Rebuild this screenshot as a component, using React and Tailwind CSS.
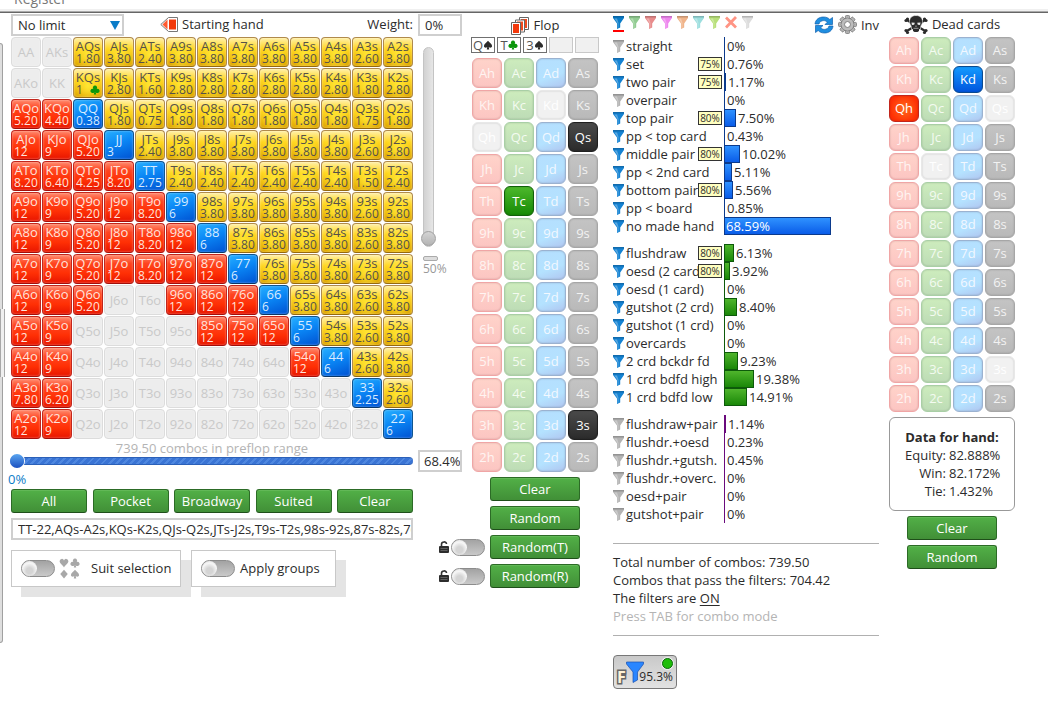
import { Fragment } from 'react'
import clsx from 'clsx'

const RANKS = ['A', 'K', 'Q', 'J', 'T', '9', '8', '7', '6', '5', '4', '3', '2']
const SUITS = ['h', 'c', 'd', 's']

// one row per rank, "-" is a hand outside of the range
const RANGE = [
  '- - 1.80 3.80 2.40 3.80 3.80 3.80 3.80 3.80 3.80 2.60 3.80',
  '- - 1 2.80 1.60 2.80 2.80 2.80 2.80 2.80 2.80 1.80 2.80',
  '5.20 4.40 0.38 1.80 0.75 1.80 1.80 1.80 1.80 1.80 1.80 1.75 1.80',
  '12 9 5.20 3 2.40 3.80 3.80 3.80 3.80 3.80 3.80 2.60 3.80',
  '8.20 6.40 4.25 8.20 2.75 2.40 2.40 2.40 2.40 2.40 2.40 1.50 2.40',
  '12 9 5.20 12 8.20 6 3.80 3.80 3.80 3.80 3.80 2.60 3.80',
  '12 9 5.20 12 8.20 12 6 3.80 3.80 3.80 3.80 2.60 3.80',
  '12 9 5.20 12 8.20 12 12 6 3.80 3.80 3.80 2.60 3.80',
  '12 9 5.20 - - 12 12 12 6 3.80 3.80 2.60 3.80',
  '12 9 - - - - 12 12 12 6 3.80 2.60 3.80',
  '12 9 - - - - - - - 12 6 2.60 3.80',
  '7.80 6.20 - - - - - - - - - 2.25 2.60',
  '12 9 - - - - - - - - - - 6',
].map((row) => row.split(' '))

const HAND_STYLES = {
  suited:
    'border-[#b08a4c] border-b-[#95690e] text-[#55514a] bg-[radial-gradient(ellipse_at_50%_60%,#ffe633_0%,transparent_65%),linear-gradient(#fff0a8,#ffd51f_40%,#dfa700)]',
  offsuit:
    'border-[#c2261c] border-b-[#a30f0a] text-[#ffe3dc] bg-[linear-gradient(#ff8a6e,#ff4420_30%,#ff3005_65%,#e81600)]',
  pair:
    'border-[#0f5590] border-b-[#0a3766] text-[#d8ebff] bg-[linear-gradient(160deg,#27b0ff,#0a86f5_45%,#0052d2)]',
  none: 'border-[#dcdcdc] text-[#c9c9c9] bg-[#ededed]',
}

const CARD_STYLES = {
  h: 'border-[#f0a5a5] bg-[linear-gradient(#ffd3ca,#fcc5c2)] text-[#fff4f2]',
  c: 'border-[#a9cfa6] bg-[linear-gradient(#cdecbd,#bddcb6)] text-[#f4fbf1]',
  d: 'border-[#9bb2d0] bg-[linear-gradient(160deg,#b5dfff,#b4e2ff_60%,#b0c6f0)] text-[#f2f8ff]',
  s: 'border-[#a6a6a6] bg-[linear-gradient(#c4c4c4,#b9b9b9)] text-[#f2f2f2]',
}

const PICKED_STYLES = {
  h: 'border-[#c2261c] bg-[radial-gradient(circle,#ff6a1a,#ff3005_75%)] text-white',
  c: 'border-[#11600a] bg-[linear-gradient(#4db82c,#168a05)] text-white',
  d: 'border-[#0a4a90] bg-[linear-gradient(#149bff,#0055dd)] text-white',
  s: 'border-[#1f1f1f] bg-[linear-gradient(#4a4a4a,#2b2b2b)] text-white',
}

const GROUPS = [
  {
    color: 'blue',
    rows: [
      { name: 'straight', value: '0', off: true },
      { name: 'set', value: '0.76', badge: '75%' },
      { name: 'two pair', value: '1.17', badge: '75%' },
      { name: 'overpair', value: '0', off: true },
      { name: 'top pair', value: '7.50', badge: '80%' },
      { name: 'pp < top card', value: '0.43' },
      { name: 'middle pair', value: '10.02', badge: '80%' },
      { name: 'pp < 2nd card', value: '5.11' },
      { name: 'bottom pair', value: '5.56', badge: '80%' },
      { name: 'pp < board', value: '0.85' },
      { name: 'no made hand', value: '68.59' },
    ],
  },
  {
    color: 'green',
    rows: [
      { name: 'flushdraw', value: '6.13', badge: '80%' },
      { name: 'oesd (2 card)', value: '3.92', badge: '80%' },
      { name: 'oesd (1 card)', value: '0' },
      { name: 'gutshot (2 crd)', value: '8.40' },
      { name: 'gutshot (1 crd)', value: '0' },
      { name: 'overcards', value: '0' },
      { name: '2 crd bckdr fd', value: '9.23' },
      { name: '1 crd bdfd high', value: '19.38' },
      { name: '1 crd bdfd low', value: '14.91' },
    ],
  },
  {
    color: 'purple',
    rows: [
      { name: 'flushdraw+pair', value: '1.14', off: true },
      { name: 'flushdr.+oesd', value: '0.23', off: true },
      { name: 'flushdr.+gutsh.', value: '0.45', off: true },
      { name: 'flushdr.+overc.', value: '0', off: true },
      { name: 'oesd+pair', value: '0', off: true },
      { name: 'gutshot+pair', value: '0', off: true },
    ],
  },
]

const BAR_STYLES = {
  blue: 'border-[#0b3a8c] bg-[linear-gradient(#2f92ff,#0a5ce8)]',
  green: 'border-[#0d5a0a] bg-[linear-gradient(#4fb52c,#1a8708)]',
  purple: 'border-[#6a0a7c] bg-[#7a1a8c]',
}

const LINE_STYLES = {
  blue: 'bg-[#0b3a8c]',
  green: 'bg-[#0d5a0a]',
  purple: 'bg-[#6a0a7c]',
}

const SUIT_PATHS = {
  s: 'M8 1C6 4 1.500 6 1.500 9.500c0 2.800 3.600 3.700 5.300 1.500L6 15h4l-.8-4c1.700 2.200 5.300 1.300 5.300-1.500C14.500 6 10 4 8 1z',
  c: 'M8 1a3.300 3.300 0 0 0-2.500 5.500A3.300 3.300 0 1 0 7 11l-1 4h4l-1-4a3.300 3.300 0 1 0 1.500-4.500A3.300 3.300 0 0 0 8 1z',
  h: 'M8 15C6 11 1 8.500 1 5a3.600 3.600 0 0 1 7-1.200A3.600 3.600 0 0 1 15 5c0 3.500-5 6-7 10z',
  d: 'M8 1l6 7-6 7-6-7z',
}

function Suit({ suit, className }) {
  return (
    <svg viewBox="0 0 16 16" className={className} fill="currentColor" aria-hidden="true">
      <path d={SUIT_PATHS[suit]} />
    </svg>
  )
}

function Funnel({ className = 'text-[#1583d3]' }) {
  return (
    <svg viewBox="0 0 11 13" className={clsx('w-[11px] h-[13px] shrink-0', className)} aria-hidden="true">
      <path d="M0 0h11v2L7.200 7.500v4L4 13V7.500L0 2z" fill="currentColor" />
      <path d="M0 0h11v1.500H0z" fill="#000" opacity=".18" />
      <path d="M1.500 2.500h2.500L5.500 7v4.500L4.500 12V7z" fill="#fff" opacity=".3" />
    </svg>
  )
}

function GreenButton({ className, children }) {
  return (
    <button
      type="button"
      className={clsx(
        'h-6 shrink-0 rounded-[3px] border border-[#2c6b26] border-b-[#1f4f1a] text-white leading-[20px]',
        'shadow-[inset_0_1px_0_#62b857] bg-[linear-gradient(#52b047,#418f37)]',
        className
      )}
    >
      {children}
    </button>
  )
}

function Toggle({ id, label }) {
  return (
    <input
      id={id}
      type="checkbox"
      role="switch"
      aria-label={label}
      className="appearance-none shrink-0 w-[34px] h-[17px] rounded-full border border-[#8c8c8c] bg-[linear-gradient(#a3a3a3,#c9c9c9)] before:block before:size-[15px] before:rounded-full before:bg-[radial-gradient(circle_at_50%_65%,#d4d4d4_25%,#f6f6f6_60%,#dcdcdc)]"
    />
  )
}

function HandCell({ row, col }) {
  const value = RANGE[row][col]
  const name =
    row === col
      ? RANKS[row] + RANKS[row]
      : row < col
        ? RANKS[row] + RANKS[col] + 's'
        : RANKS[col] + RANKS[row] + 'o'
  const kind = value === '-' ? 'none' : row === col ? 'pair' : row < col ? 'suited' : 'offsuit'

  return (
    <button
      type="button"
      className={clsx(
        'relative size-[30px] rounded border flex flex-col justify-center whitespace-nowrap text-left',
        'shadow-[inset_0_0_2px_rgba(255,255,255,0.5)]',
        HAND_STYLES[kind]
      )}
    >
      <span className="self-center leading-[13px]">{name}</span>
      {kind !== 'none' && <span className="self-start pl-[2px] text-xs leading-[12px]">{value}</span>}
      {name === 'KQs' && <Suit suit="c" className="absolute right-[2px] bottom-[2px] size-[10px] text-[#0a960a]" />}
    </button>
  )
}

function CardGrid({ picked, blocked, rowClass }) {
  return (
    <div className="grid grid-cols-[repeat(4,30px)] gap-[2px]">
      {RANKS.map((rank) => (
        <Fragment key={rank}>
          {SUITS.map((suit) => {
            const card = rank + suit
            const style = picked.includes(card)
              ? PICKED_STYLES[suit]
              : blocked.includes(card)
                ? 'border-[#e8e8e8] bg-[#f1f1f1] text-white'
                : CARD_STYLES[suit]
            return (
              <button
                key={card}
                type="button"
                className={clsx('rounded-md border pt-px shadow-[inset_0_0_2px_rgba(0,0,0,0.18)]', rowClass, style)}
              >
                {card}
              </button>
            )
          })}
        </Fragment>
      ))}
    </div>
  )
}

function StatRow({ row, color }) {
  const width = Math.max(1, Math.round(Number(row.value) * 1.56))
  const inside = width > 60

  return (
    <li className="flex h-[18px] items-center leading-[18px]">
      <div className="relative flex items-center gap-[2px] w-[111px] shrink-0 whitespace-nowrap">
        <Funnel className={row.off ? 'text-[#b4b4b4]' : 'text-[#1583d3]'} />
        <span>{row.name}</span>
        {row.badge && (
          <span className="absolute right-[2px] top-1/2 -translate-y-1/2 w-6 h-[14px] border border-[#333] bg-[#ffffc0] text-center text-[10px] leading-[12px]">
            {row.badge}
          </span>
        )}
      </div>
      <div
        className={clsx('h-full shrink-0 flex items-center', width > 3 ? ['border', BAR_STYLES[color]] : LINE_STYLES[color])}
        style={{ width }}
      >
        {inside && <span className="pl-px text-white">{row.value}%</span>}
      </div>
      {!inside && <span className="pl-[2px]">{row.value}%</span>}
    </li>
  )
}

function StackedCards() {
  return (
    <svg viewBox="0 0 19 18" className="w-[19px] h-[18px]" aria-hidden="true">
      <g fill="#f04a1c">
        <path d="M8.500.5h9v12h-9z" stroke="#666" fill="#fff" />
        <path d="M10 2h6v9h-6z" />
        <path d="M4.500 3h9v12h-9z" stroke="#666" fill="#fff" />
        <path d="M6 4.500h6v9H6z" />
        <path d="M.5 5.500h9v12h-9z" stroke="#666" fill="#fff" />
        <path d="M2 7h6v9H2z" fill="#f3380c" />
      </g>
    </svg>
  )
}

function HandIcon() {
  return (
    <svg viewBox="0 0 19 16" className="w-[19px] h-4" aria-hidden="true">
      <path d="M8.500.5h9v14h-9L.8 7.500z" fill="#fff" stroke="#777" />
      <path d="M7.500 2.500v10L2.500 7.500z" fill="#ff5a30" />
      <path d="M9 2.500h7v10H9z" fill="#f2380a" />
    </svg>
  )
}

function Lock() {
  return (
    <svg viewBox="0 0 10 12" className="w-[10px] h-3 shrink-0" aria-hidden="true">
      <path d="M2.500 6V3.200C2.500.2 7.500.2 7.500 3" fill="none" stroke="#333" strokeWidth="1.600" />
      <rect y="5" width="10" height="7" rx="1" fill="#2d2d2d" />
      <path d="M1.500 7.500h7M1.500 9.500h7" stroke="#777" strokeWidth=".7" />
    </svg>
  )
}

function Skull() {
  return (
    <svg viewBox="0 0 24 20" className="w-6 h-5" fill="#2b2b2b" aria-hidden="true">
      <path d="M2 4.500l20 12M22 4.500l-20 12" stroke="#2b2b2b" strokeWidth="2.200" />
      <circle cx="2" cy="5.500" r="1.600" />
      <circle cx="3.500" cy="4" r="1.600" />
      <circle cx="22" cy="5.500" r="1.600" />
      <circle cx="20.500" cy="4" r="1.600" />
      <circle cx="2" cy="15.500" r="1.600" />
      <circle cx="3.500" cy="17.500" r="1.600" />
      <circle cx="22" cy="15.500" r="1.600" />
      <circle cx="20.500" cy="17.500" r="1.600" />
      <path d="M12 .5c4.500 0 6.500 2.600 6.500 6 0 2.200-.8 3.200-1.500 4.200l-.7 3.800H7.700L7 10.700c-.7-1-1.500-2-1.500-4.200 0-3.400 2-6 6.500-6z" stroke="#fff" strokeWidth=".6" />
      <path d="M7.500 7.500l3.300.3-.6 2-2.300.3zM16.500 7.500l-3.300.3.6 2 2.300.3zM12 10.200l.8 1.400h-1.600z" fill="#e8e8e8" />
      <path d="M9 13.500h6v2.500l-1.500 1h-3L9 16z" />
      <path d="M9.500 13.300h5" stroke="#ccc" strokeWidth=".7" />
    </svg>
  )
}

function Refresh() {
  return (
    <svg viewBox="0 0 20 18" className="w-5 h-[18px]" aria-hidden="true">
      <path d="M1 8C1.500 3.500 5 1 9.500 1c3 0 5 1 6.300 2.500L18.500 1.500V8.500H11l2.300-2.300C12.300 5.200 11.200 4.600 9.700 4.600 7.300 4.600 5.600 5.800 5 8z" fill="#1f8ee0" stroke="#0e5fae" strokeWidth=".7" />
      <path d="M19 10c-.5 4.500-4 7-8.500 7-3 0-5-1-6.300-2.500L1.500 16.500V9.500H9l-2.300 2.300c1 1 2.100 1.600 3.600 1.600 2.400 0 4.100-1.200 4.700-3.400z" fill="#1f8ee0" stroke="#0e5fae" strokeWidth=".7" />
    </svg>
  )
}

function Gear() {
  return (
    <svg viewBox="-9 -9 18 18" className="size-[19px]" aria-hidden="true">
      <g fill="#b4b4b4" stroke="#7a7a7a" strokeWidth=".8">
        {[0, 45, 90, 135].map((angle) => (
          <rect key={angle} x="-2" y="-8.500" width="4" height="17" rx="1" transform={`rotate(${angle})`} />
        ))}
        <circle r="6" />
      </g>
      <circle r="5.600" fill="#bcbcbc" />
      <circle r="2.800" fill="#fff" stroke="#7a7a7a" strokeWidth=".9" />
    </svg>
  )
}

const TABS = [
  'text-[#92cc92]',
  'text-[#e88c8c]',
  'text-[#ee86ee]',
  'text-[#f0b48a]',
  'text-[#9cdede]',
  'text-[#b8e07a]',
]

function RangePanel() {
  return (
    <section className="flex gap-[5px]">
      <div className="w-[402px]">
        <div className="flex h-[23px] pb-px items-center">
          <div className="relative h-[22px] w-[113px]">
            <select aria-label="Limit" className="appearance-none w-full h-full border-2 border-[#cfcfcf] bg-white pl-[5px] leading-[18px]">
              <option>No limit</option>
            </select>
            <svg viewBox="0 0 10 9" className="absolute right-[4px] top-[7px] w-[10px] h-[9px] pointer-events-none" aria-hidden="true">
              <path d="M0 0h10L5 9z" fill="#0a7cc8" />
            </svg>
          </div>
          <div className="ml-9 flex items-center gap-[3px]">
            <HandIcon />
            <h2>Starting hand</h2>
          </div>
          <label htmlFor="weight" className="ml-auto">Weight:</label>
        </div>

        <div className="grid grid-cols-[repeat(13,30px)] gap-px">
          {RANKS.map((rank, row) => (
            <Fragment key={rank}>
              {RANKS.map((other, col) => (
                <HandCell key={other} row={row} col={col} />
              ))}
            </Fragment>
          ))}
        </div>

        <p className="text-center text-[#b4b4b4] leading-[18px]">739.50 combos in preflop range</p>
        <input
          type="range"
          aria-label="Preflop range"
          defaultValue="0"
          className="block appearance-none w-[403px] -ml-px h-2 rounded-full bg-[repeating-linear-gradient(135deg,#3a74d4_0px,#3a74d4_3px,#4f88e0_3px,#4f88e0_5px)] border-y border-[#2b60b8] [&::-webkit-slider-thumb]:appearance-none [&::-webkit-slider-thumb]:size-[14px] [&::-webkit-slider-thumb]:rounded-full [&::-webkit-slider-thumb]:bg-[linear-gradient(#5aa5f0,#1a50c0)] [&::-webkit-slider-thumb]:shadow-[0_0_0_1px_#fff]"
        />
        <p className="-ml-[3px] mt-[5px] mb-px leading-[18px] text-[#0a7cc8]">0%</p>

        <div className="flex justify-between">
          {['All', 'Pocket', 'Broadway', 'Suited', 'Clear'].map((name) => (
            <GreenButton key={name} className="w-[76px]">
              {name}
            </GreenButton>
          ))}
        </div>

        <input
          type="text"
          aria-label="Range"
          defaultValue="TT-22,AQs-A2s,KQs-K2s,QJs-Q2s,JTs-J2s,T9s-T2s,98s-92s,87s-82s,76s-72s"
          className="mt-[5px] block w-full h-[22px] border-2 border-[#cfcfcf] pl-[5px]"
        />

        <div className="mt-[10px] flex gap-[10px]">
          <div className="flex items-center h-[37px] w-[170px] pl-[9px] border border-[#c8c8c8] bg-white shadow-[10px_10px_0_#e4e4e4]">
            <Toggle id="suits" />
            <span className="ml-1 grid grid-cols-2 gap-px text-[#a8a8a8]">
              <Suit suit="h" className="size-[10px]" />
              <Suit suit="c" className="size-[10px]" />
              <Suit suit="d" className="size-[10px]" />
              <Suit suit="s" className="size-[10px]" />
            </span>
            <label htmlFor="suits" className="ml-[11px]">Suit selection</label>
          </div>
          <div className="flex items-center h-[37px] w-[145px] pl-[9px] border border-[#c8c8c8] bg-white shadow-[10px_10px_0_#e4e4e4]">
            <Toggle id="groups" />
            <label htmlFor="groups" className="ml-[5px]">Apply groups</label>
          </div>
        </div>
      </div>

      <div className="w-11">
        <input id="weight" type="text" defaultValue="0%" className="block w-full h-[22px] border-2 border-[#cfcfcf] pl-[5px]" />
        <input
          type="range"
          aria-label="Hand weight"
          defaultValue="0"
          className="block appearance-none mt-[11px] ml-[5px] w-[11px] h-[200px] rounded-full border border-[#c4c4c4] bg-[linear-gradient(90deg,#d2d2d2,#e6e6e6)] [writing-mode:vertical-lr] [direction:rtl] [&::-webkit-slider-thumb]:appearance-none [&::-webkit-slider-thumb]:size-[15px] [&::-webkit-slider-thumb]:rounded-full [&::-webkit-slider-thumb]:border [&::-webkit-slider-thumb]:border-[#a0a0a0] [&::-webkit-slider-thumb]:bg-[linear-gradient(#d4d4d4,#b4b4b4)]"
        />
        <div className="mt-[9px] ml-[5px] w-[15px] h-[5px] rounded-xs border border-[#aaa] bg-[#ddd]" />
        <p className="ml-[5px] text-xs text-[#999] leading-4">50%</p>
        <input
          type="text"
          aria-label="Range percent"
          defaultValue="68.4%"
          className="mt-[173px] block w-full h-[22px] border-2 border-[#cfcfcf] pl-[4px]"
        />
      </div>
    </section>
  )
}

function FlopPanel() {
  return (
    <section className="w-32">
      <div className="flex h-[23px] items-center justify-center gap-1">
        <StackedCards />
        <h2>Flop</h2>
      </div>
      <div className="flex justify-between h-4">
        {['Qs', 'Tc', '3s'].map((card) => (
          <span key={card} className="w-6 flex items-center justify-center border border-[#707070] text-[#555] leading-[14px]">
            {card[0]}
            <Suit suit={card[1]} className={clsx('size-[10px]', card[1] === 'c' ? 'text-[#0a960a]' : 'text-[#2b2b2b]')} />
          </span>
        ))}
        <span className="w-6 border border-[#c8c8c8] bg-[#f0f0f0]" />
        <span className="w-6 border border-[#c8c8c8] bg-[#f0f0f0]" />
      </div>
      <div className="mt-[5px] ml-px">
        <CardGrid picked={['Qs', 'Tc', '3s']} blocked={['Kd', 'Qh']} rowClass="h-[30px]" />
      </div>
      <div className="mt-[5px] mr-[19px] flex flex-col gap-[5px]">
        <div className="flex justify-end"><GreenButton className="w-[90px]">Clear</GreenButton></div>
        <div className="flex justify-end"><GreenButton className="w-[90px]">Random</GreenButton></div>
        {['Random(T)', 'Random(R)'].map((name) => (
          <div key={name} className="flex items-center justify-end">
            <Lock />
            <span className="ml-[2px] mr-[5px] flex">
              <Toggle label={'Lock ' + name} />
            </span>
            <GreenButton className="w-[90px]">{name}</GreenButton>
          </div>
        ))}
      </div>
    </section>
  )
}

function StatsPanel() {
  return (
    <section className="flex-1 min-w-[266px]">
      <div className="flex h-[23px] items-start pt-px">
        <div className="flex gap-[5px] pt-px">
          <button type="button" aria-label="Filter 1" className="border-b-2 border-[#f00] pb-px">
            <Funnel className="text-[#0a7cc8]" />
          </button>
          {TABS.map((tab, i) => (
            <button key={tab} type="button" aria-label={'Filter ' + (i + 2)} className="self-start">
              <Funnel className={tab} />
            </button>
          ))}
          <button type="button" aria-label="Remove filters" className="self-start">
            <svg viewBox="0 0 12 13" className="w-3 h-[13px]" aria-hidden="true">
              <path d="M1 1.500l10 10M11 1L1 11.500" stroke="#ff9484" strokeWidth="2.800" />
            </svg>
          </button>
          <button type="button" aria-label="No filter" className="self-start">
            <Funnel className="text-[#dcdcdc]" />
          </button>
        </div>
        <div className="ml-auto flex items-center gap-1">
          <button type="button" aria-label="Refresh"><Refresh /></button>
          <button type="button" aria-label="Settings"><Gear /></button>
          <button type="button" className="leading-[18px]">Inv</button>
        </div>
      </div>

      <div className="flex flex-col gap-[9px]">
        {GROUPS.map((group) => (
          <ul key={group.color}>
            {group.rows.map((row) => (
              <StatRow key={row.name} row={row} color={group.color} />
            ))}
          </ul>
        ))}
      </div>

      <div className="mt-5 border-y border-[#b0b0b0] pt-[9px] pb-[10px] leading-[18px]">
        <p>Total number of combos: 739.50</p>
        <p>Combos that pass the filters: 704.42</p>
        <p>
          The filters are <a href="#filters" className="underline underline-offset-2">ON</a>
        </p>
        <p className="text-[#b4b4b4]">Press TAB for combo mode</p>
      </div>

      <button
        type="button"
        className="relative mt-[19px] flex w-16 h-[34px] items-end rounded border border-[#777] bg-[linear-gradient(#c9c9c9,#e2e2e2)] pl-[3px]"
      >
        <span className="font-bold text-base leading-[22px] text-[#fff3d6] [-webkit-text-stroke:3px_#666] [paint-order:stroke_fill]">F</span>
        <svg viewBox="0 0 18 22" className="w-[18px] h-[22px] mb-[5px]" aria-hidden="true">
          <path d="M.5 1h17v2L11.500 11v8L7 21.500V11L.5 3z" fill="#2a86ff" stroke="#1a50b0" strokeWidth=".7" />
        </svg>
        <span className="absolute right-[3px] bottom-[3px] text-xs leading-4">95.3%</span>
        <span className="absolute right-[3px] top-[2px] size-[11px] rounded-full border border-[#0a6a0a] bg-[#1fbe0a] shadow-[0_0_0_1px_#eee]" />
      </button>
    </section>
  )
}

function DeadCardsPanel() {
  const data = [
    ['Equity:', '82.888%'],
    ['Win:', '82.172%'],
    ['Tie:', '1.432%'],
  ]

  return (
    <section className="w-[126px]">
      <div className="flex h-[23px] pb-[2px] items-center justify-center gap-1">
        <Skull />
        <h2>Dead cards</h2>
      </div>
      <CardGrid picked={['Kd', 'Qh']} blocked={['Qs', 'Tc', '3s']} rowClass="h-[27px]" />

      <div className="mt-[5px] rounded-md border border-[#999] pt-[10px] pb-[10px] leading-[18px]">
        <table className="w-full">
          <caption className="font-bold">Data for hand:</caption>
          <tbody>
            {data.map(([name, value]) => (
              <tr key={name}>
                <th className="w-[56px] p-0 text-right font-normal">{name}</th>
                <td className="p-0 pl-[3px]">{value}</td>
              </tr>
            ))}
          </tbody>
        </table>
      </div>

      <div className="mt-[5px] flex flex-col items-center gap-[5px]">
        <GreenButton className="w-[90px]">Clear</GreenButton>
        <GreenButton className="w-[90px]">Random</GreenButton>
      </div>
    </section>
  )
}

export default function App() {
  return (
    <div className="min-h-screen bg-white text-[13px] text-[#2b2b2b] font-['Open_Sans','Noto_Sans',sans-serif]">
      <header className="border-b border-[#666]">
        <div className="h-[9px] flex items-end overflow-hidden pl-[14px]">
          <span className="text-sm leading-[20px] text-[#777]">Register</span>
        </div>
        <div className="h-[3px] bg-[#f0f0f0] border-b border-[#aaa]" />
      </header>

      <div className="flex">
        <aside className="w-[11px] shrink-0 pt-[30px]">
          <div className="w-[3px] h-[600px] rounded-r-[3px] border border-l-0 border-[#a0a0a0] bg-[#dedede] pt-[265px]">
            <div className="w-[5px] h-[68px] border-x border-[#a8a8a8] bg-[#f0f0f0]" />
          </div>
        </aside>
        <main className="flex flex-1 items-start pt-px pr-[33px]">
          <RangePanel />
          <div className="flex flex-1 ml-[9px]">
            <FlopPanel />
            <div className="flex flex-1 ml-[14px] gap-[10px]">
              <StatsPanel />
              <DeadCardsPanel />
            </div>
          </div>
        </main>
      </div>
    </div>
  )
}
